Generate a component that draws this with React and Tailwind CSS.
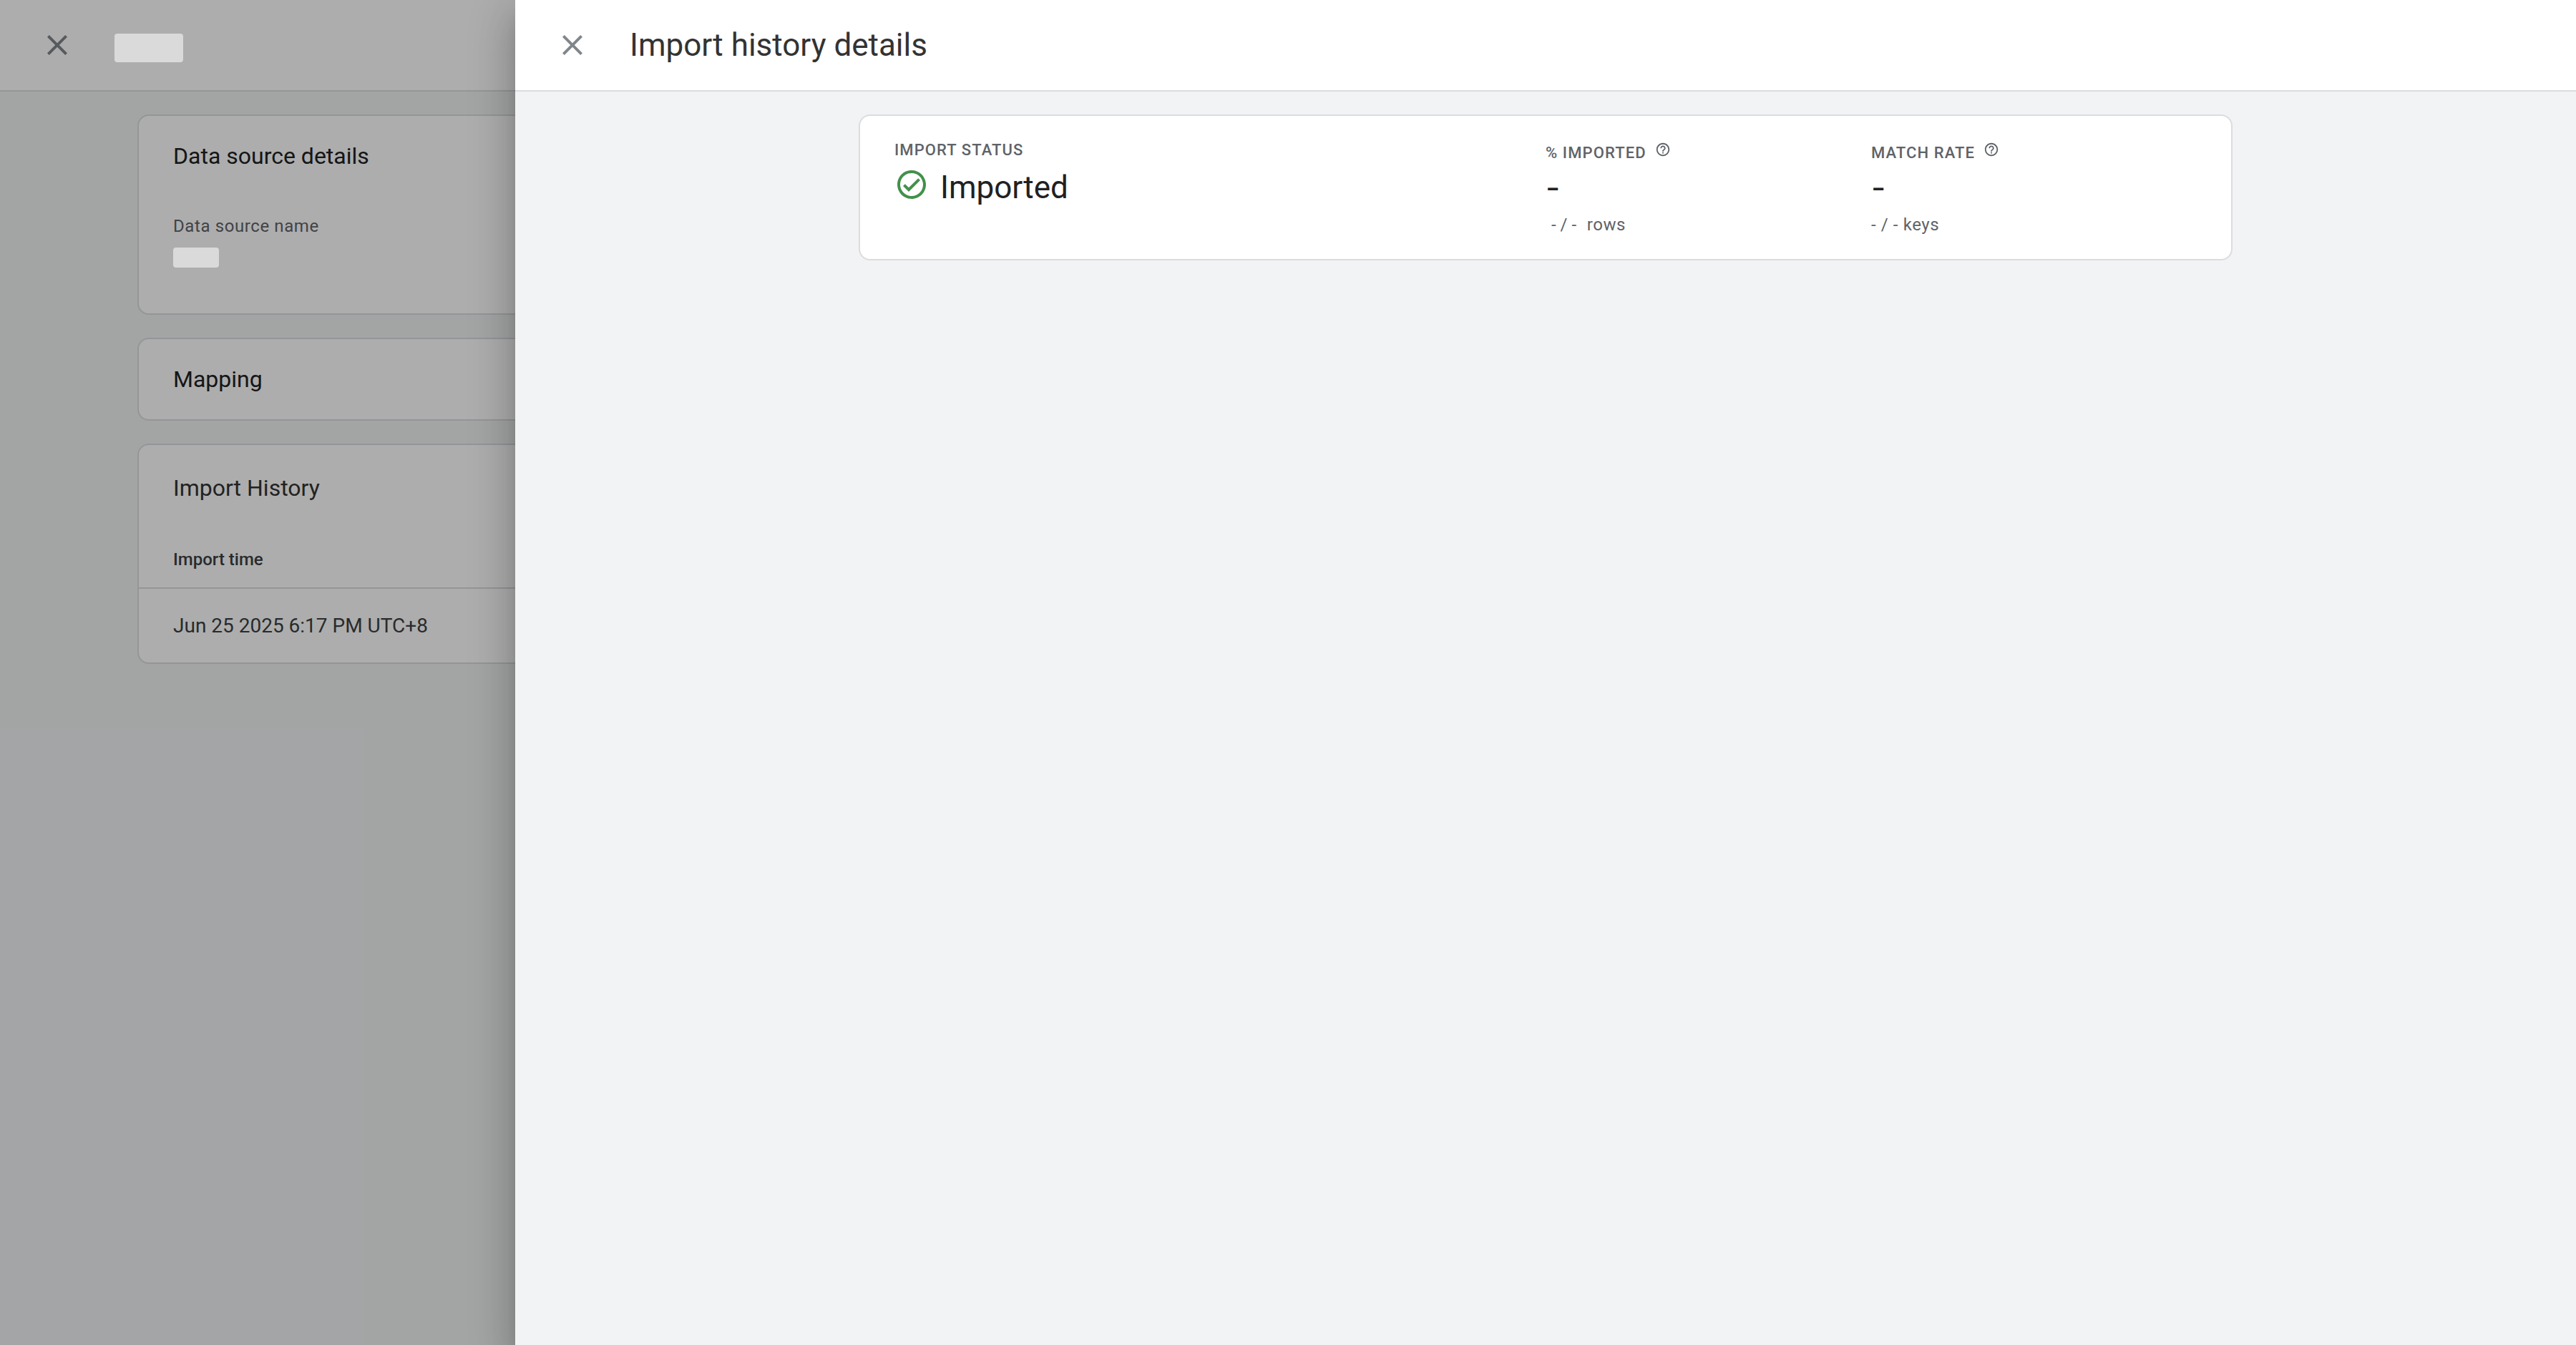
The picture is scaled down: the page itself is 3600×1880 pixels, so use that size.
import React, { useState } from "react";

function CloseIcon() {
  return (
    <svg className="w-12 h-12" viewBox="0 0 24 24" fill="currentColor" aria-hidden="true">
      <path d="M19 6.41 17.59 5 12 10.59 6.41 5 5 6.41 10.59 12 5 17.59 6.41 19 12 13.41 17.59 19 19 17.59 13.41 12z" />
    </svg>
  );
}

function CheckIcon() {
  return (
    <svg className="w-12 h-12 text-[#43904b]" viewBox="0 0 24 24" fill="currentColor" aria-hidden="true">
      <path d="M12 2C6.48 2 2 6.48 2 12s4.48 10 10 10 10-4.48 10-10S17.52 2 12 2zm0 18c-4.41 0-8-3.59-8-8s3.59-8 8-8 8 3.59 8 8-3.59 8-8 8zm4.59-12.42L10 14.17l-2.59-2.58L6 13l4 4 8-8z" />
    </svg>
  );
}

function HelpIcon() {
  return (
    <svg className="w-[22px] h-[22px]" viewBox="0 0 24 24" fill="currentColor" aria-hidden="true">
      <path d="M11 18h2v-2h-2v2zm1-16C6.48 2 2 6.48 2 12s4.48 10 10 10 10-4.48 10-10S17.52 2 12 2zm0 18c-4.41 0-8-3.59-8-8s3.59-8 8-8 8 3.59 8 8-3.59 8-8 8zm0-14c-2.21 0-4 1.79-4 4h2c0-1.1.9-2 2-2s2 .9 2 2c0 2-3 1.75-3 5h2c0-2.25 3-2.5 3-5 0-2.21-1.79-4-4-4z" />
    </svg>
  );
}

function Card({ className, children }) {
  return (
    <section className={"bg-white border-2 border-[#dadce0] rounded-2xl " + className}>
      {children}
    </section>
  );
}

function DataSourcePage() {
  return (
    <div>
      <header className="h-32 px-14 flex items-center gap-14 bg-white border-b-2 border-[#dadce0]">
        <button type="button" aria-label="Close data source" className="text-[#80868b]">
          <CloseIcon />
        </button>
        {/* redacted name, stays above the scrim */}
        <div className="relative z-20 w-24 h-10 mt-2 rounded-sm bg-[#dadada]" />
      </header>

      <main className="px-48 py-8 flex flex-col gap-8">
        <Card className="px-12 pt-8 pb-16">
          <h2 className="text-[32px] leading-12">Data source details</h2>
          <p className="mt-14 text-2xl leading-9 tracking-wide text-[#5f6368]">Data source name</p>
          <div className="relative z-20 w-16 h-7 mt-3 rounded-sm bg-[#dadada]" />
        </Card>

        <Card className="px-12 py-8">
          <h2 className="text-[32px] leading-12">Mapping</h2>
        </Card>

        <Card className="pt-9">
          <h2 className="px-12 text-[32px] leading-12 text-[#333333]">Import History</h2>
          <table className="w-full mt-9 text-left text-[#3c4043]">
            <thead>
              <tr className="h-20 border-b-2 border-[#dadce0]">
                <th className="px-12 text-2xl font-medium">Import time</th>
              </tr>
            </thead>
            <tbody>
              <tr className="h-[104px]">
                <td className="px-12 text-[28px]">Jun 25 2025 6:17 PM UTC+8</td>
              </tr>
            </tbody>
          </table>
        </Card>
      </main>
    </div>
  );
}

function Metric({ label, value, children }) {
  return (
    <div className="pt-1">
      <div className="flex items-start gap-3 text-[#5f6368]">
        <h3 className="text-[22px] leading-8 font-medium tracking-wider">{label}</h3>
        <button type="button" aria-label={"About " + label}>
          <HelpIcon />
        </button>
      </div>
      <p className="mt-1 mb-2 text-[44px] leading-14 font-['Inter',sans-serif]">{value}</p>
      <p className="text-2xl leading-8 tracking-wide text-[#5f6368]">{children}</p>
    </div>
  );
}

function ImportDetailsDrawer({ onClose }) {
  return (
    <aside className="absolute inset-y-0 right-0 z-30 w-4/5 bg-[#f1f3f4] shadow-[0_16px_20px_-10px_rgba(0,0,0,0.2),0_32px_48px_4px_rgba(0,0,0,0.14),0_12px_60px_10px_rgba(0,0,0,0.12)]">
      <header className="h-32 px-14 flex items-center gap-14 bg-white border-b-2 border-[#dadce0]">
        <button type="button" onClick={onClose} aria-label="Close details" className="text-[#80868b]">
          <CloseIcon />
        </button>
        <h1 className="text-[44px] leading-14 text-[#333333]">Import history details</h1>
      </header>

      <div className="w-2/3 mx-auto pt-8">
        <Card className="px-12 py-8 grid grid-cols-4">
          <div className="col-span-2">
            <h3 className="text-[22px] leading-8 font-medium tracking-wider text-[#5f6368]">IMPORT STATUS</h3>
            <div className="flex items-start gap-4 mt-2">
              <CheckIcon />
              <p className="text-[44px] leading-14">Imported</p>
            </div>
          </div>
          <Metric label="% IMPORTED" value="-">
            <span className="px-2 tracking-normal">- / -</span> rows
          </Metric>
          <Metric label="MATCH RATE" value="-">
            - / - keys
          </Metric>
        </Card>
      </div>
    </aside>
  );
}

export default function App() {
  const [open, setOpen] = useState(true);

  return (
    <div className="relative min-h-screen overflow-hidden bg-[#f1f3f4] text-[#202124] font-['Roboto',sans-serif]">
      <DataSourcePage />
      {open && <div className="absolute inset-0 z-10 bg-[rgba(0,0,0,0.32)]" />}
      {open && <ImportDetailsDrawer onClose={() => setOpen(false)} />}
    </div>
  );
}
